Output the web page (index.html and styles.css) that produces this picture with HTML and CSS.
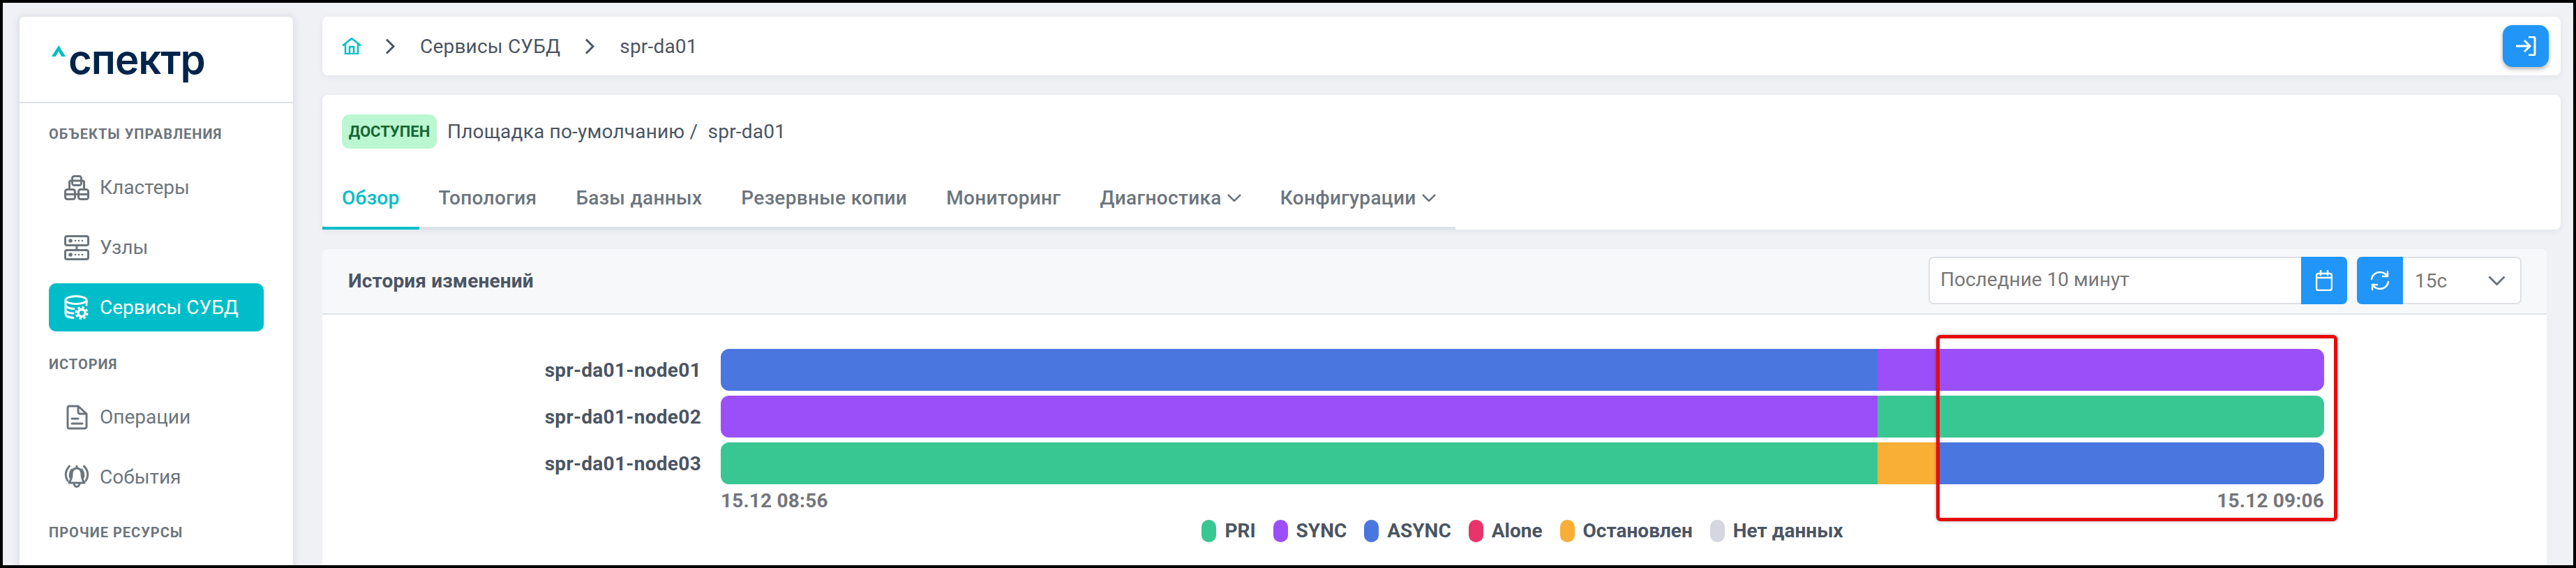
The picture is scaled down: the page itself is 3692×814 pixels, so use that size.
FILE: index.html
```html
<!DOCTYPE html>
<html lang="ru">
<head>
	<meta charset="UTF-8">
	<title>spr-da01</title>
	<link rel="stylesheet" href="styles.css">
</head>
<body>
	<aside class="sidebar">
		<div class="logo">
			<svg class="logo-caret" width="20" height="16" viewBox="0 0 20 16"><path d="M10 0 L20 16 H14.2 L10 8.6 L5.8 16 H0 Z"/></svg>
			<span class="logo-text">спектр</span>
		</div>
		<div class="nav">
			<div class="nav-title nav-title-first">ОБЪЕКТЫ УПРАВЛЕНИЯ</div>
			<a class="nav-item" href="#">
				<svg class="nav-icon" viewBox="0 0 36 36"><rect x="11.5" y="1.5" width="13" height="13" rx="3"/><path d="M11.5 8H24.5M11.5 8H9.5Q7.5 8 7.5 10V20M24.5 8H26.5Q28.5 8 28.5 10V20"/><rect x="1.5" y="20.5" width="14" height="14" rx="3"/><rect x="20.5" y="20.5" width="14" height="14" rx="3"/><path d="M1.5 27.5H34.5"/></svg>
				<span>Кластеры</span>
			</a>
			<a class="nav-item" href="#">
				<svg class="nav-icon" viewBox="0 0 36 36"><rect x="1.5" y="1.5" width="33" height="13" rx="2.5"/><rect x="1.5" y="21.5" width="33" height="13" rx="2.5"/><path d="M18 14.5V21.5"/><g class="icon-fill"><circle cx="9" cy="8" r="2.8"/><circle cx="16" cy="8" r="1.3"/><circle cx="21" cy="8" r="1.3"/><circle cx="26" cy="8" r="1.3"/><circle cx="9" cy="28" r="2.8"/><circle cx="16" cy="28" r="1.3"/><circle cx="21" cy="28" r="1.3"/><circle cx="26" cy="28" r="1.3"/></g></svg>
				<span>Узлы</span>
			</a>
			<a class="nav-item nav-item-active" href="#">
				<svg class="nav-icon" viewBox="0 0 36 36"><ellipse cx="17" cy="7" rx="15" ry="5.5"/><path d="M2 7V27C2 30 7 32 13 32.500M32 7V14M2 14C2 17 7 19.500 14 19.500M2 21C2 24 7 26 13 26"/><circle class="gear-teeth" cx="25" cy="25.500" r="8"/><circle class="gear-body" cx="25" cy="25.500" r="5"/></svg>
				<span>Сервисы СУБД</span>
			</a>
			<div class="nav-title">ИСТОРИЯ</div>
			<a class="nav-item" href="#">
				<svg class="nav-icon" viewBox="0 0 36 36"><path d="M7 2H20L32 13V31Q32 34 29 34H7Q5 34 5 31V5Q5 2 7 2ZM20 2V10Q20 13 23 13H32M11 20H20M11 27H26"/></svg>
				<span>Операции</span>
			</a>
			<a class="nav-item" href="#">
				<svg class="nav-icon" viewBox="0 0 36 36"><path d="M18 5C12.500 5 11 10 11 14C11 20 9 23 7 26H29C27 23 25 20 25 14C25 10 23.500 5 18 5ZM14 26.500C14 33 22 33 22 26.500M18 2V5M7.500 2C1 9 1 17 5 23M11 7C8 11 7.500 15 9 19M28.500 2C35 9 35 17 31 23M25 7C28 11 28.500 15 27 19"/></svg>
				<span>События</span>
			</a>
			<div class="nav-title nav-title-last">ПРОЧИЕ РЕСУРСЫ</div>
		</div>
	</aside>

	<main class="content">
		<div class="card crumbs">
			<svg class="home-icon" viewBox="0 0 28 24"><path d="M1 11.500L14 1L27 11.500M5 8.500V23H23V8.500M11 23V13H17V23"/></svg>
			<svg class="crumb-sep" viewBox="0 0 14 23"><path d="M2 1.500L12 11.500L2 21.500"/></svg>
			<span>Сервисы СУБД</span>
			<svg class="crumb-sep" viewBox="0 0 14 23"><path d="M2 1.500L12 11.500L2 21.500"/></svg>
			<span>spr-da01</span>
			<button class="login-btn"><svg width="30" height="28" viewBox="0 0 30 28"><path d="M1 14H21M13 6L21 14L13 22M19 1H26Q28 1 28 3V25Q28 27 26 27H19"/></svg></button>
		</div>

		<div class="card service">
			<div class="service-head">
				<span class="badge">ДОСТУПЕН</span>
				<span class="service-path">Площадка по-умолчанию /&nbsp; spr-da01</span>
			</div>
			<div class="tabs">
				<a class="tab tab-active" href="#">Обзор</a>
				<a class="tab" href="#">Топология</a>
				<a class="tab" href="#">Базы данных</a>
				<a class="tab" href="#">Резервные копии</a>
				<a class="tab" href="#">Мониторинг</a>
				<a class="tab" href="#">Диагностика<svg class="tab-arrow" viewBox="0 0 20 11"><path d="M1 1L10 10L19 1"/></svg></a>
				<a class="tab" href="#">Конфигурации<svg class="tab-arrow" viewBox="0 0 20 11"><path d="M1 1L10 10L19 1"/></svg></a>
			</div>
		</div>

		<section class="panel">
			<div class="panel-head">
				<div class="panel-title">История изменений</div>
				<div class="range">
					<div class="range-input">Последние 10 минут</div>
					<button class="icon-btn icon-btn-right"><svg width="24" height="30" viewBox="0 0 24 30"><path d="M4 5H20Q23 5 23 8V26Q23 29 20 29H4Q1 29 1 26V8Q1 5 4 5ZM1 11H23M7 1V7M17 1V7"/></svg></button>
				</div>
				<div class="refresh">
					<button class="icon-btn icon-btn-left"><svg width="28" height="30" viewBox="0 0 28 30"><path d="M2 13C3 7 8 3 14 3C19 3 22 5 25 9M25 2V9H18M26 17C25 23 20 27 14 27C9 27 6 25 3 21M3 28V21H10"/></svg></button>
					<div class="refresh-select">15с<svg class="select-arrow" viewBox="0 0 25 14"><path d="M1.500 1.500L12.500 12.500L23.500 1.500"/></svg></div>
				</div>
			</div>
			<div class="chart">
				<div class="chart-grid">
					<div class="node-name">spr-da01-node01</div>
					<div class="bar">
						<div class="seg seg-async" style="width:72.15%"></div>
						<div class="seg seg-sync" style="width:27.85%"></div>
					</div>
					<div class="node-name">spr-da01-node02</div>
					<div class="bar">
						<div class="seg seg-sync" style="width:72.15%"></div>
						<div class="seg seg-pri" style="width:27.85%"></div>
					</div>
					<div class="node-name">spr-da01-node03</div>
					<div class="bar">
						<div class="seg seg-pri" style="width:72.15%"></div>
						<div class="seg seg-stop" style="width:3.7%"></div>
						<div class="seg seg-async" style="width:24.15%"></div>
					</div>
					<div></div>
					<div class="chart-dates"><span>15.12 08:56</span><span>15.12 09:06</span></div>
				</div>
				<div class="legend">
					<div class="legend-item"><i class="swatch seg-pri"></i>PRI</div>
					<div class="legend-item"><i class="swatch seg-sync"></i>SYNC</div>
					<div class="legend-item"><i class="swatch seg-async"></i>ASYNC</div>
					<div class="legend-item"><i class="swatch seg-alone"></i>Alone</div>
					<div class="legend-item"><i class="swatch seg-stop"></i>Остановлен</div>
					<div class="legend-item"><i class="swatch seg-none"></i>Нет данных</div>
				</div>
				<!-- красная рамка поверх графика -->
				<div class="mark"></div>
			</div>
		</section>
	</main>
</body>
</html>
```

FILE: styles.css
```css
* {
	box-sizing: border-box;
}
html, body {
	height: 100%;
	margin: 0;
}
body {
	display: flex;
	gap: 42px;
	padding: 20px 18px 0 24px;
	border: 4px solid #000;
	background: #eff1f5;
	overflow: hidden;
	font-family: Roboto, "Noto Sans", sans-serif;
	color: #4b5563;
}
a {
	text-decoration: none;
	color: inherit;
}
button {
	border: 0;
	padding: 0;
	cursor: pointer;
}
svg {
	display: block;
	flex: none;
}

/* левая колонка */
.sidebar {
	flex: none;
	width: 392px;
	height: 820px;
	background: #fff;
	border-radius: 7px;
	box-shadow: 0 0 12px rgba(60, 70, 90, .16);
}
.logo {
	display: flex;
	align-items: flex-start;
	gap: 4px;
	height: 124px;
	padding: 41px 0 0 46px;
	border-bottom: 2px solid #dfe3e8;
}
.logo-text {
	margin-top: -2px;
	font-family: Inter, Roboto, sans-serif;
	font-size: 58px;
	font-weight: 600;
	line-height: 44px;
	color: #00244a;
	letter-spacing: -1px;
}
.logo-caret {
	fill: #00bec9;
}
.nav {
	padding: 0 42px;
}
.nav-title {
	height: 24px;
	margin: 35px 0 29px;
	font-size: 20px;
	font-weight: 700;
	line-height: 24px;
	letter-spacing: 1px;
	color: #6c757d;
}
.nav-title-first {
	margin-top: 32px;
	margin-bottom: 30px;
}
.nav-title-last {
	margin-top: 33px;
}
.nav-item {
	display: flex;
	align-items: center;
	gap: 15px;
	height: 69px;
	margin-top: 17px;
	padding-left: 22px;
	border-radius: 10px;
	font-size: 28px;
	color: #6c757d;
}
.nav-title + .nav-item {
	margin-top: 0;
}
.nav-icon {
	width: 36px;
	height: 36px;
	fill: none;
	stroke: #6c757d;
	stroke-width: 3;
	stroke-linejoin: round;
	stroke-linecap: round;
}
.icon-fill {
	fill: #6c757d;
	stroke: none;
}
.nav-item-active {
	background: #00bec9;
	color: #fff;
}
.nav-item-active .nav-icon {
	stroke: #fff;
}
.gear-teeth {
	fill: none;
	stroke: #fff;
	stroke-width: 3;
	stroke-dasharray: 3.5 2.8;
	stroke-linecap: butt;
}
.gear-body {
	fill: #00bec9;
	stroke: #fff;
	stroke-width: 3.500;
}

/* основная часть */
.content {
	flex: 1;
	min-width: 0;
	display: flex;
	flex-direction: column;
}
.card {
	background: #fff;
	border-radius: 8px;
	box-shadow: 0 2px 8px rgba(60, 70, 90, .08);
}
.crumbs {
	display: flex;
	align-items: center;
	height: 84px;
	padding: 0 17px 0 28px;
	font-size: 28px;
	letter-spacing: .2px;
}
.home-icon {
	width: 28px;
	height: 24px;
	margin-right: 34px;
	fill: none;
	stroke: #00bec9;
	stroke-width: 2.500;
}
.crumb-sep {
	width: 14px;
	height: 23px;
	margin-right: 36px;
	fill: none;
	stroke: #4b5563;
	stroke-width: 3;
}
.crumbs span {
	margin-right: 35px;
}
.login-btn {
	display: flex;
	align-items: center;
	justify-content: center;
	width: 66px;
	height: 60px;
	margin-left: auto;
	border-radius: 14px;
	background: #2196f8;
	box-shadow: 0 3px 6px rgba(0, 0, 0, .3);
}
.login-btn svg {
	fill: none;
	stroke: #fff;
	stroke-width: 3;
}
.service {
	margin-top: 28px;
	height: 193px;
	padding-top: 28px;
}
.service-head {
	display: flex;
	align-items: center;
	gap: 15px;
	padding-left: 28px;
	font-size: 28px;
	letter-spacing: .2px;
}
.badge {
	display: block;
	width: 136px;
	height: 49px;
	border-radius: 11px;
	background: #bbf7d0;
	color: #166534;
	font-size: 22px;
	font-weight: 700;
	line-height: 49px;
	letter-spacing: 0;
	text-align: center;
}
.tabs {
	display: flex;
	width: fit-content;
	height: 116px;
	border-bottom: 4px solid #dee2e6;
	padding-top: 47px;
	border-bottom-left-radius: 8px;
}
.tab {
	display: flex;
	align-items: center;
	height: 69px;
	padding: 0 28px 18px;
	border-bottom: 4px solid transparent;
	font-size: 28px;
	font-weight: 500;
	letter-spacing: .32px;
	color: #6c757d;
}
.tab-active {
	color: #00bec9;
	border-bottom-color: #00bec9;
}
.tab-arrow {
	width: 20px;
	height: 11px;
	margin-left: 8px;
	fill: none;
	stroke: #6c757d;
	stroke-width: 2.500;
}
.panel {
	flex: 1;
	margin: 28px 20px 0 0;
	background: #fff;
	border-radius: 8px 8px 0 0;
}
.panel-head {
	display: flex;
	align-items: center;
	gap: 14px;
	height: 94px;
	padding: 10px 36px 12px 37px;
	background: #f7f8fa;
	border-bottom: 2px solid #dee2e6;
	border-radius: 8px 8px 0 0;
}
.panel-title {
	margin-right: auto;
	font-size: 28px;
	font-weight: 700;
	letter-spacing: .15px;
}
.range,
.refresh {
	display: flex;
	height: 68px;
}
.range-input {
	width: 534px;
	padding-left: 15px;
	background: #fff;
	border: 2px solid #dfe1e6;
	border-right: 0;
	border-radius: 7px 0 0 7px;
	font-size: 28px;
	line-height: 62px;
	color: #777;
}
.icon-btn {
	display: flex;
	align-items: center;
	justify-content: center;
	width: 66px;
	background: #2196f8;
}
.icon-btn svg {
	fill: none;
	stroke: #fff;
	stroke-width: 2.500;
	stroke-linejoin: round;
	stroke-linecap: round;
}
.icon-btn-right {
	border-radius: 0 7px 7px 0;
}
.icon-btn-left {
	border-radius: 7px 0 0 7px;
}
.refresh-select {
	display: flex;
	align-items: center;
	justify-content: space-between;
	width: 170px;
	padding: 0 21px 0 17px;
	background: #fff;
	border: 2px solid #dfe1e6;
	border-left: 0;
	border-radius: 0 7px 7px 0;
	font-size: 28px;
	color: #777;
}
.select-arrow {
	width: 25px;
	height: 14px;
	fill: none;
	stroke: #6c757d;
	stroke-width: 3;
}

/* график */
.chart {
	position: relative;
	padding-top: 49px;
}
.chart-grid {
	display: grid;
	grid-template-columns: 543px 2298px;
	grid-auto-rows: 60px;
	column-gap: 28px;
	row-gap: 7px;
}
.node-name {
	align-self: center;
	text-align: right;
	font-size: 28px;
	font-weight: 700;
	letter-spacing: .3px;
}
.bar {
	display: flex;
	border-radius: 12px;
	overflow: hidden;
}
.seg-async {
	background: #4a76e0;
}
.seg-sync {
	background: #9b4ff9;
}
.seg-pri {
	background: #38c792;
}
.seg-stop {
	background: #f9ae36;
}
.seg-alone {
	background: #e9336b;
}
.seg-none {
	background: #d4d7e0;
}
.chart-dates {
	display: flex;
	justify-content: space-between;
	height: 34px;
	font-size: 28px;
	font-weight: 700;
	letter-spacing: .2px;
	line-height: 34px;
	color: #75767a;
}
.legend {
	display: flex;
	justify-content: center;
	gap: 25px;
	margin: -17px 0 0 571px;
	width: 2298px;
}
.legend-item {
	display: flex;
	align-items: center;
	gap: 12px;
	font-size: 28px;
	font-weight: 700;
}
.swatch {
	display: block;
	width: 21px;
	height: 32px;
	border-radius: 10px;
}
.mark {
	position: absolute;
	left: 2313px;
	top: 29px;
	width: 575px;
	height: 267px;
	border: 5px solid #e60b0b;
	border-radius: 6px;
	box-shadow: 0 0 4px rgba(0, 0, 0, .35);
}
```
